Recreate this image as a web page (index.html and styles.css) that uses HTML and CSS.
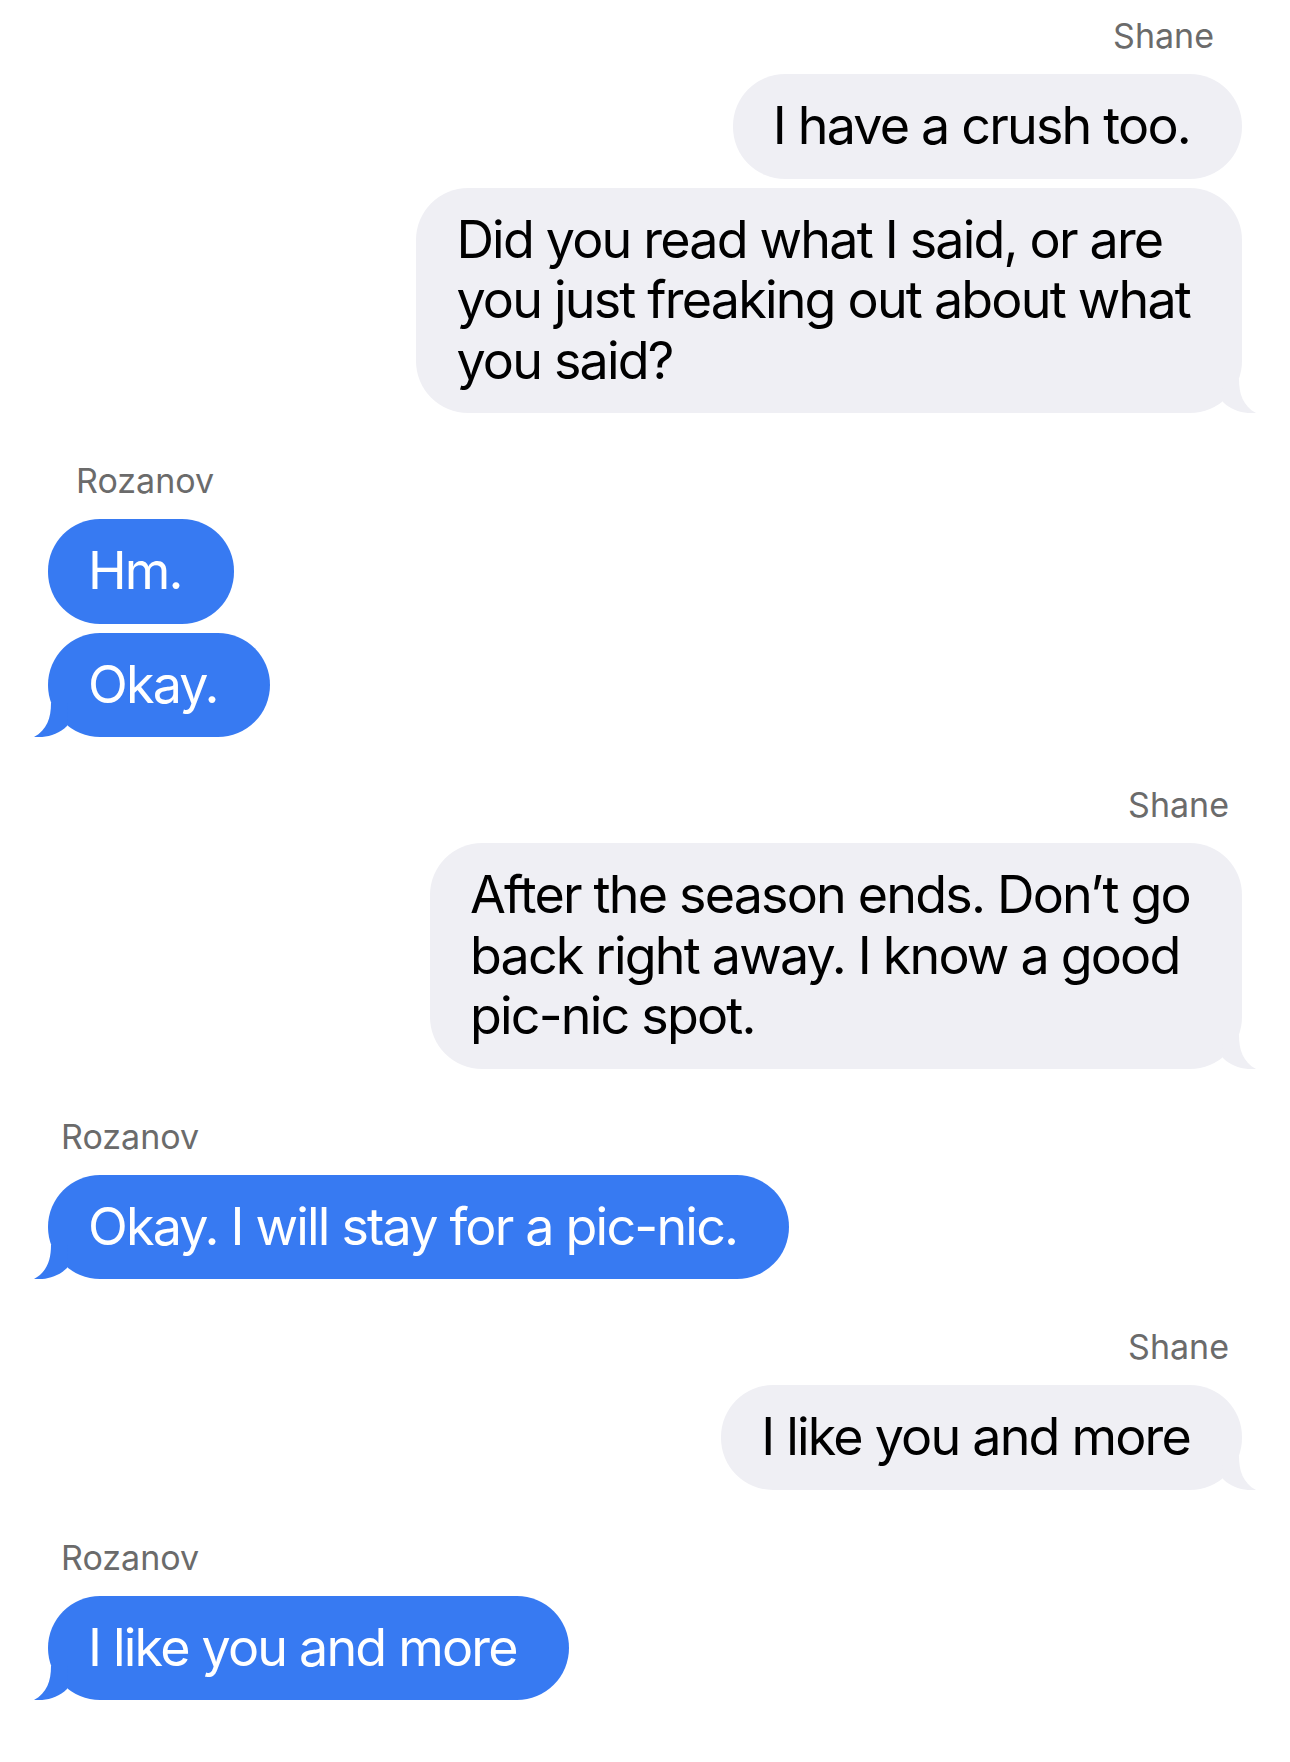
FILE: index.html
```html
<!DOCTYPE html>
<html lang="en">
<head>
  <meta charset="UTF-8">
  <meta name="viewport" content="width=device-width, initial-scale=1.0">
  <title>Shane &amp; Rozanov</title>
  <link rel="stylesheet" href="styles.css">
</head>
<body>
  <main class="chat">
    <!-- Shane -->
    <section class="group out">
      <div class="name wide">Shane</div>
      <div class="bubble">I have a crush too.</div>
      <div class="bubble">
        Did you read what I said, or are<br>you just freaking out about what<br>you said?
        <svg class="tail" viewBox="0 0 34 34"><path d="M0 0H17C17 15 21 27 34 34C23 35 10 32 1 23Z"/></svg>
      </div>
    </section>

    <!-- Rozanov -->
    <section class="group in">
      <div class="name wide">Rozanov</div>
      <div class="bubble">Hm.</div>
      <div class="bubble">
        Okay.
        <svg class="tail" viewBox="0 0 34 34"><path d="M0 0H17C17 15 21 27 34 34C23 35 10 32 1 23Z"/></svg>
      </div>
    </section>

    <section class="group out">
      <div class="name">Shane</div>
      <div class="bubble">
        After the season ends. Don’t go<br>back right away. I know a good<br>pic-nic spot.
        <svg class="tail" viewBox="0 0 34 34"><path d="M0 0H17C17 15 21 27 34 34C23 35 10 32 1 23Z"/></svg>
      </div>
    </section>

    <section class="group in">
      <div class="name">Rozanov</div>
      <div class="bubble">
        Okay. I will stay for a pic-nic.
        <svg class="tail" viewBox="0 0 34 34"><path d="M0 0H17C17 15 21 27 34 34C23 35 10 32 1 23Z"/></svg>
      </div>
    </section>

    <section class="group out">
      <div class="name">Shane</div>
      <div class="bubble">
        I like you and more
        <svg class="tail" viewBox="0 0 34 34"><path d="M0 0H17C17 15 21 27 34 34C23 35 10 32 1 23Z"/></svg>
      </div>
    </section>

    <section class="group in">
      <div class="name">Rozanov</div>
      <div class="bubble">
        I like you and more
        <svg class="tail" viewBox="0 0 34 34"><path d="M0 0H17C17 15 21 27 34 34C23 35 10 32 1 23Z"/></svg>
      </div>
    </section>
  </main>
</body>
</html>
```

FILE: styles.css
```css
body {
  margin: 0;
  background: #fff;
  font-family: Inter, "Noto Sans", sans-serif;
}

.chat {
  display: flex;
  flex-direction: column;
  gap: 50px;
  padding: 18px 48px 40px;
}

.group {
  display: flex;
  flex-direction: column;
  gap: 9px;
}
.group.out {
  align-items: flex-end;
}
.group.in {
  align-items: flex-start;
}

/* nombre del remitente */
.name {
  font-size: 34px;
  line-height: 36px;
  color: #6b6b6b;
  margin-bottom: 11px; /* 9px del gap + 11 = 20 */
  padding: 0 13px;
}
.name.wide {
  padding: 0 28px;
}

.bubble {
  position: relative;
  font-size: 52px;
  line-height: 60.5px;
  letter-spacing: -1.8px;
  padding: 22px 52px 22px 40px;
  border-radius: 52px;
  color: #000;
  background: #efeff4;
}
.in .bubble {
  color: #fff;
  background: #377af2;
}

.tail {
  position: absolute;
  bottom: 0;
  width: 34px;
  height: 34px;
}
.out .tail {
  right: -14px;
  fill: #efeff4;
}
.in .tail {
  left: -14px;
  fill: #377af2;
  transform: scaleX(-1);
}
```
